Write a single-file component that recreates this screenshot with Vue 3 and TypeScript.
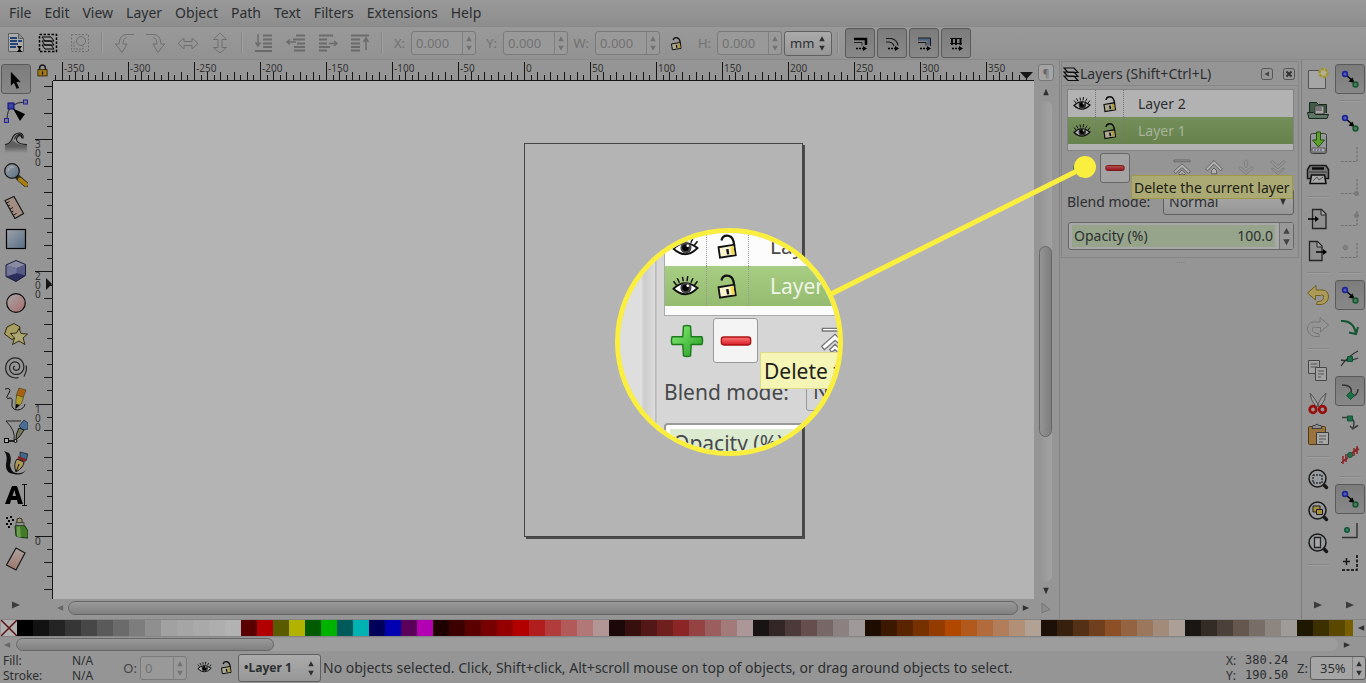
<script setup lang="ts">
import { ref } from 'vue'

const menus = ['File', 'Edit', 'View', 'Layer', 'Object', 'Path', 'Text', 'Filters', 'Extensions', 'Help']

interface Tool { icon: string; label: string; off?: boolean; on?: boolean; sep?: boolean }

const actions: Tool[] = [
  { icon: 'xml', label: 'Select all' },
  { icon: 'selall', label: 'Select all in all layers' },
  { icon: 'desel', label: 'Deselect', off: true, sep: true },
  { icon: 'rotl', label: 'Rotate left', off: true },
  { icon: 'rotr', label: 'Rotate right', off: true },
  { icon: 'fliph', label: 'Flip horizontal', off: true },
  { icon: 'flipv', label: 'Flip vertical', off: true, sep: true },
  { icon: 'bottom', label: 'Lower to bottom', off: true },
  { icon: 'lower', label: 'Lower', off: true },
  { icon: 'raise', label: 'Raise', off: true },
  { icon: 'top', label: 'Raise to top', off: true, sep: true },
]
const affects: Tool[] = [
  { icon: 'afstroke', label: 'Scale stroke width' },
  { icon: 'afcorner', label: 'Scale rounded corners' },
  { icon: 'afgrad', label: 'Move gradients' },
  { icon: 'afpat', label: 'Move patterns' },
]
const tools: Tool[] = [
  { icon: 'pointer', label: 'Selector', on: true },
  { icon: 'node', label: 'Node editor' },
  { icon: 'tweak', label: 'Tweak' },
  { icon: 'zoom', label: 'Zoom' },
  { icon: 'measure', label: 'Measure' },
  { icon: 'rect', label: 'Rectangle' },
  { icon: 'box3d', label: '3D box' },
  { icon: 'ellipse', label: 'Ellipse' },
  { icon: 'star', label: 'Star' },
  { icon: 'spiral', label: 'Spiral' },
  { icon: 'pencil', label: 'Pencil' },
  { icon: 'pen', label: 'Bezier' },
  { icon: 'callig', label: 'Calligraphy' },
  { icon: 'text', label: 'Text' },
  { icon: 'spray', label: 'Spray' },
  { icon: 'eraser', label: 'Eraser' },
]
const commands: Tool[] = [
  { icon: 'new', label: 'New' },
  { icon: 'open', label: 'Open' },
  { icon: 'save', label: 'Save' },
  { icon: 'print', label: 'Print', sep: true },
  { icon: 'import', label: 'Import' },
  { icon: 'export', label: 'Export', sep: true },
  { icon: 'undo', label: 'Undo' },
  { icon: 'redo', label: 'Redo', off: true, sep: true },
  { icon: 'copy', label: 'Copy' },
  { icon: 'cut', label: 'Cut' },
  { icon: 'paste', label: 'Paste', sep: true },
  { icon: 'zsel', label: 'Zoom selection' },
  { icon: 'zdraw', label: 'Zoom drawing' },
  { icon: 'zpage', label: 'Zoom page', sep: true },
]
const snaps: Tool[] = [
  { icon: 'snap', label: 'Enable snapping', on: true, sep: true },
  { icon: 'snap', label: 'Snap bounding boxes' },
  { icon: 'sbox1', label: 'Snap to edges', off: true },
  { icon: 'sbox2', label: 'Snap to corners', off: true },
  { icon: 'sbox3', label: 'Snap edge midpoints', off: true },
  { icon: 'sbox4', label: 'Snap box centers', off: true, sep: true },
  { icon: 'snap', label: 'Snap nodes', on: true },
  { icon: 'spath', label: 'Snap to paths' },
  { icon: 'scross', label: 'Snap to intersections' },
  { icon: 'scusp', label: 'Snap to cusp nodes', on: true },
  { icon: 'ssmooth', label: 'Snap smooth nodes' },
  { icon: 'smid', label: 'Snap line midpoints', sep: true },
  { icon: 'snap', label: 'Snap others', on: true },
  { icon: 'scenter', label: 'Snap object centers' },
  { icon: 'sgrid', label: 'Snap rotation centers' },
]

const pos = ref([
  { id: 'fx', label: 'X:', value: '0.000' },
  { id: 'fy', label: 'Y:', value: '0.000' },
  { id: 'fw', label: 'W:', value: '0.000' },
])
const layers = [
  { name: 'Layer 2', active: false },
  { name: 'Layer 1', active: true },
]
const orders = ['ltop', 'lup', 'ldown', 'lbottom']

const scaleX = 1.32
const scaleY = 1.323
const originX = 471
const originY = 455
const hTicks: { x: number; h: number; label: string }[] = []
for (let u = -355; u <= 380; u += 5) {
  const major = u % 50 === 0
  hTicks.push({ x: Math.round(originX + u * scaleX), h: major ? 18 : u % 10 === 0 ? 8 : 5, label: major ? String(u) : '' })
}
const vTicks: { y: number; w: number; digits: string[] }[] = []
for (let u = -40; u <= 340; u += 10) {
  const major = u % 100 === 0
  vTicks.push({ y: Math.round(originY - u * scaleY), w: major ? 18 : u % 20 === 0 ? 9 : 6, digits: major ? String(u).split('') : [] })
}

const palette = (
  '000000 1a1a1a 333333 4d4d4d 666666 808080 999999 b3b3b3 cccccc e6e6e6 ececec f2f2f2 f9f9f9 ffffff ' +
  '800000 ff0000 808000 ffff00 008000 00ff00 008080 00ffff 000080 0000ff 800080 ff00ff ' +
  '2b0000 550000 800000 aa0000 d40000 ff0000 ff2a2a ff5555 ff8080 ffaaaa ffd5d5 ' +
  '280b0b 501616 782121 a02c2c c83737 d35f5f de8787 e9afaf f4d7d7 ' +
  '241c1c 483737 6c5353 916f6f ac9393 c8b7b7 e3dbdb ' +
  '2b1100 552200 803300 aa4400 d45500 ff6600 ff7f2a ff9955 ffb380 ffccaa ffe6d5 ' +
  '28170b 502d16 784421 a05a2c c87137 d38d5f deaa87 e9c6af f4e3d7 ' +
  '241f1c 483e37 6c5d53 917c6f ac9d93 c8beb7 e3dedb ' +
  '2b2200 554400 806600 aa8800 d4aa00 ffcc00 ffdd55'
).split(' ')
</script>

<template>
  <div class="app">
    <svg class="defs" aria-hidden="true">
      <defs>
        <linearGradient id="g-blue" x1="0" y1="0" x2="1" y2="1"><stop offset="0" stop-color="#dfe9f2" /><stop offset="1" stop-color="#7f9cbc" /></linearGradient>
        <linearGradient id="g-pink" x1="0" y1="0" x2="1" y2="1"><stop offset="0" stop-color="#eee" /><stop offset="1" stop-color="#f09a9a" /></linearGradient>
        <linearGradient id="g-skin" x1="0" y1="0" x2="0" y2="1"><stop offset="0" stop-color="#f6e6e2" /><stop offset="1" stop-color="#e3ab9a" /></linearGradient>
        <linearGradient id="g-wave" x1="0" y1="0" x2="0" y2="1"><stop offset="0" stop-color="#888" /><stop offset=".5" stop-color="#888" /><stop offset="1" stop-color="#888" stop-opacity="0" /></linearGradient>
        <linearGradient id="g-plus" x1="0" y1="0" x2="1" y2="1"><stop offset="0" stop-color="#8df078" /><stop offset="1" stop-color="#1f9a20" /></linearGradient>
        <linearGradient id="g-minus" x1="0" y1="0" x2="0" y2="1"><stop offset="0" stop-color="#f77" /><stop offset="1" stop-color="#d51c28" /></linearGradient>
      </defs>
      <symbol id="i-xml" viewBox="0 0 24 24"><path d="M4.500 2.500h10l5 5v13h-15z" fill="#f3f3f3" stroke="#888" /><path d="M14.500 2.500v5h5z" fill="#ccc" stroke="#888" /><path d="M6 7h7M6 10h7m1 0h4M6 13h8M6 16h6" stroke="#2f5fa8" stroke-width="2" /><path d="M13 15h5l-2 3 2 3h-5l2-3z" fill="#000" /></symbol>
      <symbol id="i-selall" viewBox="0 0 24 24"><rect x="3.500" y="3.500" width="17" height="17" fill="none" stroke="#000" stroke-width="1.500" stroke-dasharray="2.500 1.500" /><path d="M6 14h9l3 4H9zM6 10h9l3 4H9zM6 6h9l3 4H9z" fill="#ddd" stroke="#000" /></symbol>
      <symbol id="i-desel" viewBox="0 0 24 24"><rect x="3.500" y="3.500" width="17" height="17" fill="none" stroke="#222" stroke-dasharray="2 1.500" /><circle cx="13" cy="10" r="4.500" fill="none" stroke="#222" /><path d="M6 11v7h9v-3" fill="none" stroke="#222" stroke-dasharray="2 1" /></symbol>
      <symbol id="i-rotl" viewBox="0 0 24 24"><path d="M22 3.500H14Q7.500 4 7 13H3.500L10 21.500l5-8.500h-4q0-6 4-6.500" fill="none" stroke="#222" /></symbol>
      <symbol id="i-rotr" viewBox="0 0 24 24"><path d="M2 3.500h8q6.500.5 7 9.500h3.500L14 21.500 9 13h4q0-6-4-6.500" fill="none" stroke="#222" /></symbol>
      <symbol id="i-fliph" viewBox="0 0 24 24"><path d="M2 12.500l6-5.500v3.500h8V7l6 5.500-6 5.500v-3.500H8V18z" fill="none" stroke="#222" /></symbol>
      <symbol id="i-flipv" viewBox="0 0 24 24"><path d="M12 2l6.500 6.500H14v8h4.500L12 22l-6.500-5.500H10v-8H5.500z" fill="none" stroke="#222" /></symbol>
      <symbol id="i-bottom" viewBox="0 0 24 24"><path d="M11 4.500h9M11 8.500h9M11 12.500h9M11 16h9M3 20h17" stroke="#111" stroke-width="2" /><path d="M6 3v11M3.500 11.500L6 15l2.500-3.500" fill="none" stroke="#111" stroke-width="1.500" /></symbol>
      <symbol id="i-lower" viewBox="0 0 24 24"><path d="M12 4.500h9M9 8.500h12M13 12.500h8M10 16h11M10 19.500h11" stroke="#111" stroke-width="2" /><path d="M3 11h9M6 8.500L3 11l3 2.500" fill="none" stroke="#111" stroke-width="1.500" /></symbol>
      <symbol id="i-raise" viewBox="0 0 24 24"><path d="M3 4.500h14M3 8.500h8M3 12.500h8M3 16h11M3 19.500h8" stroke="#111" stroke-width="2" /><path d="M13 12.500h8M18 10l3 2.500-3 2.500" fill="none" stroke="#111" stroke-width="1.500" /></symbol>
      <symbol id="i-top" viewBox="0 0 24 24"><path d="M3 4.500h18M3 8.500h9M3 12.500h9M3 16h9M3 19.500h9" stroke="#111" stroke-width="2" /><path d="M18 19V8M15.500 11L18 7l2.500 4" fill="none" stroke="#111" stroke-width="1.500" /></symbol>
      <symbol id="i-afstroke" viewBox="0 0 24 24"><path d="M6 8h12v6" fill="none" stroke="#000" stroke-width="2.500" /><path d="M6 11.500h8v3" fill="none" stroke="#333" /><path d="M8 17.500h7" stroke="#000" stroke-width="1.500" stroke-dasharray="2 1" /><path d="M15 15l4 2.500-4 2.500z" /></symbol>
      <symbol id="i-afcorner" viewBox="0 0 24 24"><path d="M6 7.500h5q6 1 7 7M6 11h3q4 .5 5 4" fill="none" stroke="#222" stroke-width="1.200" /><path d="M8 17.500h7" stroke="#000" stroke-width="1.500" stroke-dasharray="2 1" /><path d="M15 15l4 2.500-4 2.500z" /></symbol>
      <symbol id="i-afgrad" viewBox="0 0 24 24"><path d="M6 8.500h10.500v6" fill="none" stroke="#6d8fba" stroke-width="2.500" /><path d="M6 7h12.500v8M6 11.500h8v3" fill="none" stroke="#222" /><path d="M8 17.500h7" stroke="#000" stroke-width="1.500" stroke-dasharray="2 1" /><path d="M15 15l4 2.500-4 2.500z" /></symbol>
      <symbol id="i-afpat" viewBox="0 0 24 24"><path d="M6 7.500h12M6 12.500h12" stroke="#000" stroke-width="1.200" /><path d="M8 7v7M12 7v7M16.500 7v7" stroke="#111" stroke-width="2" /><path d="M8 17.500h7" stroke="#000" stroke-width="1.500" stroke-dasharray="2 1" /><path d="M15 15l4 2.500-4 2.500z" /></symbol>
      <symbol id="i-pointer" viewBox="0 0 24 24"><path d="M6.500 4v15.500l3.300-3.200 2.700 6 3-1.400-2.600-5.700h4.400z" fill="#000" stroke="#ccc" stroke-width=".6" /></symbol>
      <symbol id="i-node" viewBox="0 0 24 24"><path d="M21 3Q13 3 8 7t-5 14" fill="none" stroke="#333" /><rect x="19.500" y="1" width="4" height="4" fill="#aac" stroke="#33d" /><rect x="4" y="4" width="6" height="6" fill="#5562e8" stroke="#11a" /><rect x=".5" y="19.500" width="4" height="4" fill="#aac" stroke="#33d" /><path d="M9 9.500l12 5.500-5 7z" /></symbol>
      <symbol id="i-tweak" viewBox="0 0 24 24"><path d="M1 14q6-1 8-5 3 5 14 5v8H1z" fill="url(#g-wave)" /><path d="M1 13.500q5-.5 7-5.500 2-6 7.500-6 4.500.5 3.500 5l-1.500-.5Q17 4 14.500 5q-3 2-1.500 5 2 3.500 10 3.500M17.500 6.500q1-3-2-3-4 .5-5 5" fill="none" stroke="#222" stroke-width="1.100" /></symbol>
      <symbol id="i-zoom" viewBox="0 0 24 24"><path d="M14 14.500l8 7" stroke="#442" stroke-width="5.500" stroke-linecap="round" /><path d="M16 16.500l6 5" stroke="#f3b814" stroke-width="4" stroke-linecap="round" /><circle cx="8" cy="8" r="7.300" fill="url(#g-blue)" stroke="#222" stroke-width="1.300" /><path d="M4 8q1-5 6-4" stroke="#fff" fill="none" /></symbol>
      <symbol id="i-measure" viewBox="0 0 24 24"><path d="M1 5.500l9-4 9.500 17-8.500 5z" fill="#e9c9bb" stroke="#222" stroke-width="1.200" /><path d="M2.500 8l3-1.500M4 11l2-1M6 14l3-1.500M7.500 17l2-1M9.500 20l3-1.500" stroke="#222" /></symbol>
      <symbol id="i-rect" viewBox="0 0 24 24"><rect x="2.500" y="2.500" width="19" height="19" fill="url(#g-blue)" stroke="#000" stroke-width="1.200" /></symbol>
      <symbol id="i-box3d" viewBox="0 0 24 24"><path d="M12 1.500l9.500 4v11l-9.500 6-10-5V6z" fill="#8d90c8" /><path d="M2 6l10-4.500 9.500 4-9 3.500z" fill="#c6c8e8" /><path d="M12.500 9l9-3.500v11L12.500 14z" fill="#7d80bd" /><path d="M12.500 14l9 2.500-9.500 6-10-5z" fill="#3d4082" /><path d="M2 6l10.500 3v5L2 17.500z" fill="#a2a5d6" /><path d="M12 1.500l9.500 4v11l-9.500 6-10-5V6z" fill="none" stroke="#222b55" /></symbol>
      <symbol id="i-ellipse" viewBox="0 0 24 24"><circle cx="12" cy="12" r="9.300" fill="url(#g-pink)" stroke="#111" stroke-width="1.200" /></symbol>
      <symbol id="i-star" viewBox="0 0 24 24"><path d="M3 4l7-3.500L16 4l-1 9-7 3.500L.5 11z" fill="#f0e28c" stroke="#443d12" /><path d="M15 5.500l2 5 6.500.5-4.500 4 2 6.500-6-3.500-6.500 3.500 2-6.500-4-4.500 6-.5z" fill="#f9eda0" stroke="#443d12" /></symbol>
      <symbol id="i-spiral" viewBox="0 0 24 24"><path d="M11 11q-2.500 1-1 3.500 2.500 2 5-.5 2-4-1.500-6.500-5-2-7.500 3-1.500 6 3.500 8.500 7 2 10-4.500 1.500-8-5-11.200-8-2-12 5.200-2.500 8 3 12.500 5 3 9 1.500M20 21.500q3.500-6 2-11" fill="none" stroke="#333" stroke-width="1.200" /></symbol>
      <symbol id="i-pencil" viewBox="0 0 24 24"><path d="M1 2q7-2 4 4-5 7 1 5 3 0 2 5-1 7 6 7 6-1 7-6" fill="none" stroke="#222" /><path d="M15 1l7 2-3 8-7-2z" fill="#f08a1d" stroke="#552" stroke-width=".6" /><path d="M13 8l6.500 2.500-2 6-6 5 .5-9z" fill="#f6dc3d" stroke="#552" stroke-width=".6" /><path d="M11.500 22l.5-5 4 1z" fill="#000" /></symbol>
      <symbol id="i-pen" viewBox="0 0 24 24"><path d="M2 2q10 10 8 19M2 2h15" fill="none" stroke="#333" /><path d="M15 7l5-6 4 3v6l-5 1z" fill="#6a9fd8" stroke="#134" stroke-width=".7" /><path d="M15 9l5 2-4 6-4 4 .5-6z" fill="#a8a880" stroke="#222" /><rect x=".5" y="19.500" width="4" height="4" fill="#fff" stroke="#000" /><circle cx="11.500" cy="22" r="1.500" fill="#fff" stroke="#000" /><path d="M5 22h5" stroke="#000" stroke-width="1.500" /></symbol>
      <symbol id="i-callig" viewBox="0 0 24 24"><path d="M0 0l5 2q3 3 1 12 1 7 6 8 6 1 10-3-4 6-12 4Q1 22 2 13 4 4 0 0z" fill="#111" /><path d="M16 1l8 2-2 7-6-3z" fill="#5d95c5" stroke="#222" stroke-width=".7" /><path d="M14 5l8 3-1 3-7-3z" fill="#b33" /><path d="M13 8l7 3q0 5-8 10-3-8 1-13z" fill="#f6d778" stroke="#222" /><path d="M12 21l3-8" stroke="#222" /></symbol>
      <symbol id="i-text" viewBox="0 0 24 24"><path d="M1 21L8 3h5l6 18h-5l-1-4H7l-1 4zM8.500 13H12l-1.700-6z" fill="#000" fill-rule="evenodd" /><path d="M18 1.500h5M20.500 1.500v21M18 22.500h5" stroke="#111" /></symbol>
      <symbol id="i-spray" viewBox="0 0 24 24"><path d="M11 11q5-3 10 0l3 5v7q-7 0-12-2z" fill="#5fae38" stroke="#1f4d10" /><path d="M13 12l3-.5 1 11-4-1z" fill="#9bdd78" /><path d="M13 4q3-2 5 0v4h-5z" fill="#ddd39b" stroke="#443" /><path d="M12 7.500h8v3h-8z" fill="#ccc" stroke="#443" stroke-width=".7" /><path d="M2 2h2v2H2zM6 1h2v2H6zM4 5h2v2H4zM8 4h2v2H8zM2 8h2v2H2zM6 8h2v2H6zM4 11h2v2H4z" /></symbol>
      <symbol id="i-eraser" viewBox="0 0 24 24"><path d="M12 1l9 5-9 17-9.500-5z" fill="url(#g-skin)" stroke="#222" stroke-width="1.200" /></symbol>

      <symbol id="i-new" viewBox="0 0 24 24"><path d="M2.500 3.500h17v18h-17z" fill="#ececec" stroke="#777" /><circle cx="17.500" cy="6" r="4" fill="#fffcd0" stroke="#e5d43d" stroke-width="2.500" stroke-dasharray="3 1" /></symbol>
      <symbol id="i-open" viewBox="0 0 24 24"><path d="M3.500 14V3.500h7l2 2h8V14" fill="#5d8266" stroke="#22382a" /><path d="M9 7h9v8H9z" fill="#eee" stroke="#555" /><path d="M10 9h6M10 11h6" stroke="#666" /><path d="M1.500 13.500h6l2 2h13l-1.500 4h-18z" fill="#87a78f" stroke="#22382a" /></symbol>
      <symbol id="i-save" viewBox="0 0 24 24"><rect x="4.500" y="2.500" width="16" height="20" rx="2" fill="#d5d9dd" stroke="#555" /><path d="M6 17h13v4H6z" fill="#fff" stroke="#777" /><path d="M8 19h8" stroke="#55a" stroke-dasharray="2 1" /><path d="M10.500 1h4v8h4l-6 7-6-7h4z" fill="#8be33d" stroke="#2d7310" /></symbol>
      <symbol id="i-print" viewBox="0 0 24 24"><path d="M4 2.500h16l2.500 4v9h-21v-9z" fill="#aaa" stroke="#222" stroke-width="1.500" /><path d="M6 5.500h12" stroke="#111" stroke-width="2.500" /><path d="M3 9h18" stroke="#555" /><path d="M5.500 12h13l1.500 8.500H4z" fill="#eee" stroke="#111" stroke-width="1.500" /><path d="M7 18l4-4 2 3 4-3" fill="none" stroke="#777" /></symbol>
      <symbol id="i-import" viewBox="0 0 24 24"><path d="M6.500 2.500h9l4.500 4.500v14.500H6.500z" fill="#ccc" stroke="#333" stroke-width="1.300" /><path d="M15 3v5h5" fill="#eee" stroke="#333" /><path d="M2 12h8" stroke="#000" stroke-width="1.500" /><path d="M9 9l4 3-4 3z" /></symbol>
      <symbol id="i-export" viewBox="0 0 24 24"><path d="M3.500 2.500h8L16 7v14.500H3.500z" fill="#ccc" stroke="#333" stroke-width="1.300" /><path d="M11 3v5h5" fill="#eee" stroke="#333" /><path d="M10 13h8" stroke="#000" stroke-width="1.500" /><path d="M17 10l4 3-4 3z" /></symbol>
      <symbol id="i-undo" viewBox="0 0 24 24"><path d="M1.500 10L10 2.500V7h7q5.500 1 5.500 7-.5 6-7 7.500h-5l1-3q6 0 6-4t-3-2h-5V17z" fill="#f5dd7c" stroke="#9e842d" /></symbol>
      <symbol id="i-redo" viewBox="0 0 24 24"><path d="M22.500 10L14 2.500V7H7q-5.500 1-5.500 7 .5 6 7 7.500h5l-1-3q-6 0-6-4t3-2h5V17z" fill="none" stroke="#444" /></symbol>
      <symbol id="i-copy" viewBox="0 0 24 24"><path d="M2.500 1.500h11v13h-11z" fill="#e8e8e8" stroke="#666" /><path d="M4.500 5h7M4.500 8h7" stroke="#777" /><path d="M9.500 8.500h11v13h-11z" fill="#e8e8e8" stroke="#666" /><path d="M12 12h6M12 15h6M12 18h3" stroke="#777" /></symbol>
      <symbol id="i-cut" viewBox="0 0 24 24"><path d="M4 2q5 5 9 13l-3 1Q4 8 4 2zM20 2q-6 5-9 13l3 1q6-7 6-14z" fill="#ddd" stroke="#777" /><circle cx="7" cy="18.500" r="3.300" fill="none" stroke="#d11" stroke-width="2.700" /><circle cx="16.500" cy="18.500" r="3.300" fill="none" stroke="#d11" stroke-width="2.700" /></symbol>
      <symbol id="i-paste" viewBox="0 0 24 24"><rect x="2.500" y="3.500" width="17" height="18" rx="1" fill="#dca55a" stroke="#76501c" /><path d="M6 5.500h10l-1-3h-2q-2-3-4 0H7z" fill="#ccc" stroke="#555" /><path d="M10.500 9.500h12v12h-12z" fill="#eee" stroke="#555" /><path d="M13 13h7M13 16h7M13 19h4" stroke="#777" /></symbol>
      <symbol id="i-zsel" viewBox="0 0 24 24"><path d="M17 17l3.500 3.500" stroke="#222" stroke-width="3.500" stroke-linecap="round" /><circle cx="11.500" cy="11.500" r="8.500" fill="#d7dee2" stroke="#222" stroke-width="1.500" /><rect x="7" y="8" width="9" height="8" fill="none" stroke="#000" stroke-dasharray="2 1" /></symbol>
      <symbol id="i-zdraw" viewBox="0 0 24 24"><path d="M17 17l3.500 3.500" stroke="#222" stroke-width="3.500" stroke-linecap="round" /><circle cx="11.500" cy="11.500" r="8.500" fill="#d7dee2" stroke="#222" stroke-width="1.500" /><path d="M7 7h7v6H7z" fill="#f2cf55" stroke="#222" /><path d="M10.500 10.500h6v5h-6z" fill="#f2cf55" stroke="#222" /></symbol>
      <symbol id="i-zpage" viewBox="0 0 24 24"><path d="M17 17l3.500 3.500" stroke="#222" stroke-width="3.500" stroke-linecap="round" /><circle cx="11.500" cy="11.500" r="8.500" fill="#d7dee2" stroke="#222" stroke-width="1.500" /><path d="M8.500 6.500h6v10h-6z" fill="#eee" stroke="#333" stroke-width="1.300" /></symbol>

      <symbol id="i-snap" viewBox="0 0 24 24"><path d="M8 8l7 6" stroke="#000" stroke-width="1.500" /><path d="M16.500 16l-6-1.500 4-4z" /><circle cx="7" cy="7" r="2.400" fill="#7b85ff" stroke="#2a34d8" stroke-width="1.600" /><circle cx="17.500" cy="17.500" r="2.400" fill="#6fb58c" stroke="#1d7d48" stroke-width="1.600" /></symbol>
      <symbol id="i-sbox1" viewBox="0 0 24 24"><path d="M3 18.500h16V4" fill="none" stroke="#222" stroke-width="1.200" stroke-dasharray="2.500 1.500" /></symbol>
      <symbol id="i-sbox2" viewBox="0 0 24 24"><path d="M3 18.500h16V4" fill="none" stroke="#222" stroke-width="1.200" stroke-dasharray="2.500 1.500" /><circle cx="18.500" cy="18.500" r="2.500" fill="#555" /></symbol>
      <symbol id="i-sbox3" viewBox="0 0 24 24"><path d="M3 18.500h16V4" fill="none" stroke="#222" stroke-width="1.200" stroke-dasharray="2.500 1.500" /><circle cx="18.500" cy="8.500" r="2.500" fill="#555" /></symbol>
      <symbol id="i-sbox4" viewBox="0 0 24 24"><path d="M3 18.500h16V4" fill="none" stroke="#222" stroke-width="1.200" stroke-dasharray="2.500 1.500" /><circle cx="7.500" cy="8.500" r="2.300" fill="#777" stroke="#444" /></symbol>
      <symbol id="i-spath" viewBox="0 0 24 24"><path d="M3 6q12-1 15 12" fill="none" stroke="#1f7a48" stroke-width="2" /><path d="M11 17.500l7 1.500 2-7" fill="none" stroke="#1f7a48" stroke-width="2" /></symbol>
      <symbol id="i-scross" viewBox="0 0 24 24"><path d="M3 19Q10 9 20 4M3 13q9 2 17-2" fill="none" stroke="#444" stroke-width="1.300" /><path d="M9.500 9.500h5v5h-5z" fill="#2c9c60" stroke="#175" /></symbol>
      <symbol id="i-scusp" viewBox="0 0 24 24"><path d="M4 6q13 0 8 12M12 18q8-1 8-8" fill="none" stroke="#444" stroke-width="1.400" /><path d="M12.500 12.500l4 4-4 4-4-4z" fill="#2c9c60" stroke="#175" /></symbol>
      <symbol id="i-ssmooth" viewBox="0 0 24 24"><path d="M4 6.500h8q6 2 3 11l5-3M15 18l-3-3" fill="none" stroke="#555" stroke-width="1.500" /><path d="M9.500 5h5v5h-5z" fill="#2c9c60" stroke="#175" /></symbol>
      <symbol id="i-smid" viewBox="0 0 24 24"><path d="M3 20L20 4" stroke="#555" /><path d="M5 13v8M8 11v8M4 19l6-4M16 5v8M19 3v8M14 10l7-4" stroke="#c33" stroke-width="1.500" /><circle cx="12" cy="12" r="2.500" fill="#4a9a6c" stroke="#175" /></symbol>
      <symbol id="i-scenter" viewBox="0 0 24 24"><path d="M4 18.500h15V4" fill="none" stroke="#444" stroke-width="1.400" /><circle cx="9" cy="11" r="2.200" fill="#59b883" stroke="#175" stroke-width="1.500" /></symbol>
      <symbol id="i-sgrid" viewBox="0 0 24 24"><path d="M4 19h15V4" fill="none" stroke="#000" stroke-width="1.500" stroke-dasharray="3 1.500" /><path d="M5 10.500h7M8.500 7v7" stroke="#222" stroke-width="1.500" /></symbol>

      <symbol id="i-eye" viewBox="0 0 18 18"><path d="M1 10.500Q8 3.500 17 10q-8 8-16 .5z" fill="#fff" stroke="#111" stroke-width="1.200" /><circle cx="9.300" cy="9.900" r="3.700" fill="#444" /><circle cx="9" cy="9.800" r="2.200" fill="#000" /><circle cx="10.500" cy="8.500" r=".9" fill="#fff" /><path d="M3 8L1 5.500M5 6.500L3.500 3.500M7.500 5.500L7 2.500M10 5.500L10.500 2M12.500 6.500L14 3.500M15 8l2-2.500" stroke="#111" /></symbol>
      <symbol id="i-unlock" viewBox="0 0 18 18"><path d="M5 5Q5.500 1.800 8.700 1.800T13 5.500l.5 3" fill="none" stroke="#111" stroke-width="1.500" /><path d="M3 9.500l10.500-1.700 1 7L4 16.500z" fill="#f8f2cf" stroke="#111" stroke-width="1.200" /><path d="M11 9l2-.3.800 5.700-2 .3z" fill="#f5d94a" /><path d="M8 10.800l1.700-.2.500 3.500-1.500.2z" fill="#111" /></symbol>
      <symbol id="i-lock" viewBox="0 0 18 18"><path d="M5.500 9V6q.3-3.500 3.500-3.500T12.500 6v3" fill="none" stroke="#222" stroke-width="1.800" /><rect x="3.500" y="8" width="11" height="7.500" fill="#e9af1e" stroke="#3a2b00" /><path d="M8.300 10h1.400v4H8.300z" fill="#111" /></symbol>
      <symbol id="i-layers" viewBox="0 0 18 18"><path d="M2 11h10l4 4.500H6zM2 7h10l4 4.500H6zM2 3h10l4 4.500H6z" fill="#ddd" stroke="#111" stroke-width="1.200" /></symbol>
      <symbol id="i-plus" viewBox="0 0 24 24"><path d="M9.500 1.500q2.500-1 5 0l.5 7.500h7.500q1 3 0 5.500H15l-.5 8q-2.500 1-5 0l-.5-8H1.500q-1-2.500 0-5.500H9z" fill="url(#g-plus)" stroke="#1c7a1c" /></symbol>
      <symbol id="i-minus" viewBox="0 0 24 24"><rect x="1" y="9" width="22" height="6" rx="2" fill="url(#g-minus)" stroke="#a11" /></symbol>
      <symbol id="i-ltop" viewBox="0 0 24 24"><path d="M2.500 2.500h19v2h-19z" fill="#fff" stroke="#777" /><path d="M12 7l10 9-2 2.500-8-7-8 7L2 16z" fill="#fff" stroke="#777" /><path d="M12 14.500l4 4-1.500 2-2.500-2-2.500 2-1.500-2z" fill="#fff" stroke="#777" /></symbol>
      <symbol id="i-lup" viewBox="0 0 24 24"><path d="M12 3l10 10-2 2.500-8-8-8 8L2 13z" fill="#fff" stroke="#777" /><path d="M12 12l3 3v4h-6v-4z" fill="#fff" stroke="#777" /></symbol>
      <symbol id="i-ldown" viewBox="0 0 24 24"><path d="M12 20L3 12l2-2 7 6 7-6 2 2zM10 4l2-2 2 2v5l-2 3-2-3z" fill="#ddd" stroke="#555" /></symbol>
      <symbol id="i-lbottom" viewBox="0 0 24 24"><path d="M12 13L3 5l2-2 7 6 7-6 2 2zM12 20l-8-7 2-1 6 5 6-5 2 1z" fill="#ddd" stroke="#555" /></symbol>
      <symbol id="i-spin" viewBox="0 0 12 24"><path d="M6 4.500l3 5.500H3zM6 20.500l3-5.500H3z" fill="currentColor" /></symbol>
      <symbol id="i-tri" viewBox="0 0 10 10"><path d="M1 1.500l8 3.500-8 3.500z" fill="currentColor" /></symbol>
    </svg>

    <nav class="menu"><button v-for="m in menus" :key="m">{{ m }}</button></nav>

    <div class="bar">
      <template v-for="a in actions" :key="a.icon">
        <button class="tool" :class="{ off: a.off }" :aria-label="a.label"><svg class="icon"><use :href="'#i-' + a.icon" /></svg></button>
        <i v-if="a.sep" class="vsep"></i>
      </template>
      <div class="fields">
        <span v-for="p in pos" :key="p.id" class="field off">
          <label :for="p.id">{{ p.label }}</label>
          <span class="spin"><input :id="p.id" v-model="p.value" disabled><svg class="arrows"><use href="#i-spin" /></svg></span>
        </span>
      </div>
      <button class="lockbtn" aria-label="Lock ratio"><svg class="tiny icon"><use href="#i-unlock" /></svg></button>
      <span class="field off last">
        <label for="fh">H:</label>
        <span class="spin"><input id="fh" value="0.000" disabled><svg class="arrows"><use href="#i-spin" /></svg></span>
      </span>
      <span class="combo unit"><select aria-label="Units"><option>mm</option></select><svg class="arrows"><use href="#i-spin" /></svg></span>
      <i class="vsep"></i>
      <button v-for="a in affects" :key="a.icon" class="tool on" :aria-label="a.label"><svg class="icon"><use :href="'#i-' + a.icon" /></svg></button>
    </div>

    <main class="main">
      <div class="strip">
        <button v-for="t in tools" :key="t.icon" class="tool" :class="{ on: t.on }" :aria-label="t.label"><svg class="icon"><use :href="'#i-' + t.icon" /></svg></button>
        <svg class="more"><use href="#i-tri" /></svg>
      </div>

      <div class="editor">
        <div class="corner"><svg class="tiny icon"><use href="#i-lock" /></svg></div>
        <svg class="hruler">
          <g v-for="t in hTicks" :key="t.x">
            <rect :x="t.x" :y="20 - t.h" width="1" :height="t.h" />
            <text v-if="t.label" :x="t.x + 2" y="12">{{ t.label }}</text>
          </g>
          <rect x="0" y="20" width="100%" height="1" />
          <path d="M967 12h13l-6.500 7z" />
        </svg>
        <button class="pagebtn" aria-label="Toggle guides">¶</button>
        <svg class="vruler">
          <g v-for="t in vTicks" :key="t.y">
            <rect :x="19 - t.w" :y="t.y" :width="t.w" height="1" />
            <text v-for="(d, i) in t.digits" :key="i" x="1" :y="t.y + 9 + i * 9">{{ d }}</text>
          </g>
          <rect x="18" y="0" width="1" height="100%" />
          <path d="M12 197v12l6-6z" />
        </svg>
        <div class="canvas"><div class="page"></div></div>
        <div class="vscroll">
          <svg class="tri up"><use href="#i-tri" /></svg>
          <div class="trough"><div class="thumb"></div></div>
          <svg class="tri down"><use href="#i-tri" /></svg>
        </div>
        <div class="hscroll">
          <svg class="tri left faint"><use href="#i-tri" /></svg>
          <div class="thumb"></div>
          <svg class="tri"><use href="#i-tri" /></svg>
        </div>
        <svg class="grip" viewBox="0 0 12 12"><path d="M2 1l8 6.500-8 3.500z" fill="#8c8c8c" stroke="#777" /></svg>
      </div>

      <section class="dock">
        <div class="panel">
          <header>
            <svg class="small icon"><use href="#i-layers" /></svg>
            <h1>Layers (Shift+Ctrl+L)</h1>
            <button aria-label="Iconify"><svg viewBox="0 0 12 12"><rect x=".5" y=".5" width="11" height="11" rx="2" fill="none" stroke="#555" /><path d="M8 3.500v5L3.500 6z" fill="#444" /></svg></button>
            <button aria-label="Close"><svg viewBox="0 0 12 12"><rect x=".5" y=".5" width="11" height="11" rx="2" fill="none" stroke="#555" /><path d="M3.500 3.500l5 5M8.500 3.500l-5 5" stroke="#333" stroke-width="2" /></svg></button>
          </header>
          <div class="body">
            <ul class="layers">
              <li v-for="l in layers" :key="l.name" :class="{ active: l.active }">
                <span class="cell"><svg class="small icon"><use href="#i-eye" /></svg></span>
                <span class="cell"><svg class="small icon"><use href="#i-unlock" /></svg></span>
                <span class="name">{{ l.name }}</span>
              </li>
            </ul>
            <div class="ops">
              <button class="op" aria-label="Add layer"><svg class="icon"><use href="#i-plus" /></svg></button>
              <button class="op raised" aria-label="Delete layer"><svg class="icon"><use href="#i-minus" /></svg></button>
              <span class="grow"></span>
              <button v-for="(o, i) in orders" :key="o" class="op order" :class="{ weak: i > 1 }" :aria-label="o"><svg class="icon"><use :href="'#i-' + o" /></svg></button>
              <div class="tooltip" role="tooltip">Delete the current layer</div>
            </div>
            <div class="blend">
              <label for="blend">Blend mode:</label>
              <span class="combo"><select id="blend"><option>Normal</option></select><svg class="tri down"><use href="#i-tri" /></svg></span>
            </div>
            <div class="opacity">
              <div class="fill"><label for="opacity">Opacity (%)</label><input id="opacity" value="100.0"></div>
              <svg class="arrows"><use href="#i-spin" /></svg>
            </div>
          </div>
        </div>
        <div class="dots">....</div>
      </section>

      <div class="strip cmd">
        <template v-for="t in commands" :key="t.icon">
          <button class="tool" :class="{ off: t.off }" :aria-label="t.label"><svg class="icon"><use :href="'#i-' + t.icon" /></svg></button>
          <i v-if="t.sep" class="hsep"></i>
        </template>
        <svg class="more"><use href="#i-tri" /></svg>
      </div>
      <div class="strip">
        <template v-for="t in snaps" :key="t.label">
          <button class="tool" :class="{ off: t.off, on: t.on }" :aria-label="t.label"><svg class="icon"><use :href="'#i-' + t.icon" /></svg></button>
          <i v-if="t.sep" class="hsep"></i>
        </template>
        <svg class="more"><use href="#i-tri" /></svg>
      </div>
    </main>

    <div class="palette">
      <svg class="none" viewBox="0 0 16 16"><path d="M0 0h16v16H0z" fill="#b0b0b0" /><path d="M0 0l16 16M16 0L0 16" stroke="#5c1010" stroke-width="1.500" /></svg>
      <div class="swatches"><i v-for="(c, i) in palette" :key="i" :style="{ backgroundColor: '#' + c }"></i></div>
      <svg class="tri left"><use href="#i-tri" /></svg>
    </div>
    <div class="pscroll">
      <svg class="tri left faint"><use href="#i-tri" /></svg>
      <div class="track"><div class="thumb"></div></div>
      <svg class="tri"><use href="#i-tri" /></svg>
    </div>

    <footer class="status">
      <dl><dt>Fill:</dt><dd>N/A</dd><dt>Stroke:</dt><dd>N/A</dd></dl>
      <span class="field off obox"><label for="fo">O:</label><span class="spin"><input id="fo" value="0" disabled><svg class="arrows"><use href="#i-spin" /></svg></span></span>
      <svg class="tiny icon"><use href="#i-eye" /></svg>
      <svg class="tiny icon"><use href="#i-unlock" /></svg>
      <span class="combo cur"><select aria-label="Current layer"><option>•Layer 1</option></select><svg class="arrows"><use href="#i-spin" /></svg></span>
      <p>No objects selected. Click, Shift+click, Alt+scroll mouse on top of objects, or drag around objects to select.</p>
      <dl class="xy"><dt>X:</dt><dd>380.24</dd><dt>Y:</dt><dd>190.50</dd></dl>
      <label class="zl" for="fz">Z:</label>
      <span class="spin zoom"><input id="fz" value="35%"><svg class="arrows"><use href="#i-spin" /></svg></span>
    </footer>

    <svg class="pointer-line" aria-hidden="true"><path d="M831 294L1085 167" stroke="#faee3f" stroke-width="5" /><circle cx="1085" cy="167" r="11" fill="#faee3f" /></svg>
    <div class="lens" aria-hidden="true">
      <div class="lens-edge"></div>
      <div class="lens-body">
        <ul>
          <li v-for="l in layers" :key="l.name" :class="{ active: l.active }">
            <span class="cell"><svg class="icon"><use href="#i-eye" /></svg></span>
            <span class="cell"><svg class="icon"><use href="#i-unlock" /></svg></span>
            <span class="name">{{ l.name }}</span>
          </li>
        </ul>
        <div class="lens-ops">
          <span class="big"><svg class="icon"><use href="#i-plus" /></svg></span>
          <span class="big raised"><svg class="icon"><use href="#i-minus" /></svg></span>
          <svg class="icon arrow"><use href="#i-ltop" /></svg>
          <div class="tooltip">Delete the</div>
        </div>
        <div class="lens-blend"><span>Blend mode:</span><b>Normal</b></div>
        <div class="lens-opacity"><span>Opacity (%)</span></div>
      </div>
    </div>
  </div>
</template>

<style>
html, body { margin: 0; background: #959595; }
</style>

<style scoped>
* { box-sizing: border-box; }
.app { position: relative; display: flex; flex-direction: column; min-height: 100vh; overflow: hidden; background: #959595; color: #2c2f31; font: 14px/18px "Noto Sans", "Open Sans", sans-serif; }
button { border: 0; padding: 0; margin: 0; background: none; font: inherit; color: inherit; }
input, select { font: inherit; color: inherit; min-width: 0; border: 0; margin: 0; padding: 0; background: none; appearance: none; outline: 0; }
ul, dl, dd, p, h1 { margin: 0; padding: 0; list-style: none; }
.defs { position: absolute; width: 0; height: 0; }
.icon { width: 24px; height: 24px; flex: none; filter: brightness(.7); display: block; }
.small { width: 18px; height: 18px; }
.tiny { width: 15px; height: 15px; }
.tri { width: 8px; height: 8px; flex: none; color: #303030; display: block; }
.left { transform: rotate(180deg); }
.up { transform: rotate(-90deg); }
.down { transform: rotate(90deg); }
.faint { opacity: .45; }

.menu { display: flex; gap: 13px; height: 26px; padding: 0 9px; align-items: center; background: linear-gradient(#999, #8d8d8d); }
.bar { display: flex; align-items: center; height: 34px; border-top: 1px solid #898989; border-bottom: 1px solid #8a8a8a; background: linear-gradient(#999, #929292); }
.tool { width: 30px; height: 30px; margin: 1px; display: flex; align-items: center; justify-content: center; border: 1px solid transparent; border-radius: 3px; flex: none; }
.tool.on { background: linear-gradient(#7c7c7c, #888); border-color: #5a5a5a; }
.tool.off .icon { opacity: .3; }
.vsep { width: 2px; height: 22px; margin: 0 5px; border-left: 1px solid #878787; border-right: 1px solid #a0a0a0; flex: none; }
.hsep { width: 22px; height: 2px; margin: 5px auto; border-top: 1px solid #868686; border-bottom: 1px solid #9f9f9f; display: block; flex: none; }
.fields { display: grid; grid-template-columns: 88px 92px 92px; }
.field { display: flex; align-items: center; justify-content: flex-end; gap: 6px; font-size: 13px; }
.bar .last { width: 90px; margin-right: 2px; }
.field.off { color: #727272; }
.obox label { color: #444; }
.spin { display: flex; height: 24px; border: 1px solid #7a7a7a; border-radius: 3px; background: #999; align-items: center; flex: none; }
.bar .spin { width: 65px; }
.spin input { flex: 1; width: 0; height: 100%; padding-left: 4px; border-right: 1px solid #7f7f7f; }
.arrows { width: 12px; height: 22px; flex: none; display: block; color: inherit; }
.lockbtn { width: 32px; display: flex; justify-content: center; }
.combo { display: flex; align-items: center; border: 1px solid #5f5f5f; border-radius: 3px; background: linear-gradient(#aaa, #979797); height: 25px; }
.combo select { flex: 1; height: 100%; padding-left: 5px; }
.unit { width: 48px; font-size: 13px; }
.unit .arrows, .cur .arrows { margin-right: 3px; }

.main { display: flex; flex: 1; min-height: 558px; }
.strip { width: 32px; padding-top: 3px; display: flex; flex-direction: column; flex: none; }
.strip.cmd { border-left: 1px solid #7d7d7d; width: 33px; }
.more { width: 10px; height: 10px; color: #3c3c3c; margin: auto auto 9px; display: block; }
.editor { flex: 1; min-width: 0; margin-left: 2px; display: grid; grid-template-columns: 19px minmax(0, 1fr) 24px; grid-template-rows: 21px minmax(0, 1fr) 20px; }
.corner { display: flex; align-items: center; padding-left: 1px; }
.hruler, .vruler { width: 100%; height: 100%; display: block; fill: #151515; font-size: 10px; overflow: hidden; }
.hruler text, .vruler text { fill: #333; }
.vruler { grid-row: 2; grid-column: 1; }
.pagebtn { width: 16px; height: 17px; margin: 4px; border: 1px solid #777; border-radius: 3px; background: #a4a4a4; font-size: 10px; line-height: 14px; color: #666; }
.canvas { position: relative; overflow: hidden; background: #b4b4b4; }
.page { position: absolute; left: 471px; top: 62px; width: 279px; height: 394px; border: 1px solid #444; box-shadow: 2px 2px 0 #4a4a4a; }
.vscroll { display: flex; flex-direction: column; align-items: center; padding: 7px 1px 4px 0; gap: 5px; }
.trough { flex: 1; width: 13px; padding-top: 145px; border-radius: 7px; background: linear-gradient(90deg, #949494, #a2a2a2); }
.thumb { border: 1px solid #666; border-radius: 7px; background: linear-gradient(#999, #808080); }
.trough .thumb { height: 191px; background: linear-gradient(90deg, #949494, #7d7d7d); }
.hscroll { grid-column: 1 / 3; display: flex; align-items: center; gap: 4px; padding: 0 4px 2px 22px; }
.hscroll .thumb { flex: 1; height: 14px; }
.grip { width: 12px; height: 12px; margin: 3px 6px; }

.dock { width: 242px; margin-left: 1px; border-left: 1px solid #838383; flex: none; }
.panel { margin: 1px 2px 0 1px; border: 1px solid #858585; }
.panel header { height: 24px; display: flex; align-items: center; border-bottom: 1px solid #888; padding-right: 3px; }
.panel h1 { font: inherit; flex: 1; }
.panel header button { width: 12px; height: 12px; margin-left: 10px; }
.panel header svg { display: block; }
.body { padding: 3px 4px 7px 5px; display: flex; flex-direction: column; }
.layers { border: 1px solid #828282; background: #b2b2b2; padding-bottom: 6px; }
.layers li { display: flex; align-items: center; height: 27px; }
.layers li.active { background: linear-gradient(#748f59, #67824d); color: #a7b39c; }
.cell { width: 28px; height: 100%; display: flex; align-items: center; justify-content: center; border-right: 1px dotted #777; }
.layers .name { padding-left: 14px; }
.ops { position: relative; display: flex; align-items: center; height: 32px; padding-top: 2px; }
.op { width: 32px; height: 30px; display: flex; align-items: center; justify-content: center; }
.op.raised { width: 30px; margin-left: 1px; border: 1px solid #666; border-radius: 3px; background: #a3a3a3; }
.op .icon { width: 20px; height: 20px; }
.op.weak { opacity: .3; }
.grow { flex: 1; }
.tooltip { position: absolute; left: 64px; top: 24px; padding: 2px; height: 24px; line-height: 19px; white-space: nowrap; background: #abaa74; border: 1px solid #a09a48; color: #1c1c14; }
.blend { display: flex; align-items: center; justify-content: space-between; height: 26px; margin-top: 6px; margin-bottom: 7px; }
.blend .combo { width: 131px; height: 26px; padding-right: 6px; }
.opacity { display: flex; height: 28px; align-items: center; border: 1px solid #666; border-radius: 3px; background: #a8a8a8; margin-left: 1px; }
.fill { flex: 1; min-width: 0; height: 22px; margin: 0 4px 0 3px; padding: 0 2px; display: flex; align-items: center; justify-content: space-between; background: #97a48c; }
.fill input { width: 60px; text-align: right; }
.opacity .arrows { width: 14px; border-left: 1px solid #777; height: 26px; background: #999; color: #444; }
.dots { text-align: center; font-size: 8px; line-height: 4px; color: #777; }

.palette { display: flex; align-items: center; height: 18px; border-top: 1px solid #858585; border-bottom: 1px solid #858585; padding: 0 1px; }
.none { width: 16px; height: 16px; flex: none; }
.swatches { display: flex; flex: 1; min-width: 0; overflow: hidden; margin-right: 4px; filter: brightness(.7); }
.swatches i { width: 16px; height: 16px; flex: none; }
.pscroll { display: flex; align-items: center; height: 15px; gap: 5px; padding: 0 15px 0 3px; }
.track { flex: 1; border-radius: 7px; background: #9d9d9d; }
.track .thumb { width: 258px; height: 13px; }
.status { display: flex; align-items: center; height: 31px; }
.status dl { display: grid; grid-template-columns: 69px auto; font-size: 12px; line-height: 15px; padding-left: 3px; width: 123px; flex: none; }
.obox { gap: 3px; width: 64px; margin-right: 10px; }
.obox .spin { width: 47px; }
.status .tiny { margin-right: 7px; }
.status .cur { width: 83px; height: 28px; font-size: 12px; font-weight: bold; margin: 0 2px 0 -3px; }
.status p { flex: 1; white-space: nowrap; }
.status .xy { grid-template-columns: 19px auto; width: 71px; padding: 0; }
.xy dd { font-family: "DejaVu Sans Mono", monospace; }
.zl { font-size: 13px; width: 13px; }
.zoom { width: 56px; background: #a5a5a5; border-color: #5b5b5b; font-size: 13px; }
.zoom input { padding-left: 9px; }

.pointer-line { position: absolute; left: 0; top: 0; width: 100%; height: 100%; pointer-events: none; }
.lens { position: absolute; left: 615px; top: 228px; width: 228px; height: 228px; border: 5px solid #faee3f; border-radius: 50%; overflow: hidden; display: flex; background: #d6d6d6; color: #46494b; font-size: 21px; line-height: 28px; }
.lens .icon { filter: none; }
.lens-edge { width: 36px; flex: none; background: linear-gradient(90deg, #dedede 60%, #ccc 70%, #dcdcdc); border-right: 1px solid #bbb; }
.lens-body { flex: none; width: 340px; padding-left: 7px; border-left: 1px solid #c4c4c4; }
.lens ul { margin-top: -8px; border: 1px solid #aaa; background: #fbfcfb; padding-bottom: 9px; }
.lens li { display: flex; align-items: center; height: 40px; }
.lens li.active { background: linear-gradient(#a8cd84, #94bb6f); color: #eef5e6; }
.lens .cell { width: 42px; border-right-color: #999; }
.lens .cell .icon { width: 27px; height: 27px; }
.lens .name { padding-left: 21px; white-space: nowrap; }
.lens-ops { position: relative; display: flex; align-items: center; height: 49px; }
.big { width: 46px; height: 45px; display: flex; align-items: center; justify-content: center; }
.big .icon { width: 34px; height: 34px; }
.big.raised { margin-left: 3px; width: 45px; border: 1px solid #999; border-radius: 3px; background: #f4f4f4; }
.big.raised .icon { width: 32px; height: 32px; }
.lens .arrow { width: 32px; height: 32px; margin-left: 61px; }
.lens .tooltip { left: 96px; top: 36px; height: 37px; padding: 4px 3px; line-height: 28px; font-size: 21px; background: #f5f5b5; border-color: #dfd98c; color: #20201a; }
.lens-blend { display: flex; height: 40px; margin-top: 7px; align-items: center; white-space: nowrap; }
.lens-blend span { width: 142px; flex: none; }
.lens-blend b { padding: 0 6px; height: 38px; line-height: 34px; font-weight: normal; border: 1px solid #999; border-radius: 3px; width: 190px; }
.lens-opacity { margin-top: 11px; height: 42px; padding: 4px; border: 2px solid #999; border-radius: 4px; background: #fff; }
.lens-opacity span { display: block; padding-left: 3px; background: #dcebcf; }
</style>
